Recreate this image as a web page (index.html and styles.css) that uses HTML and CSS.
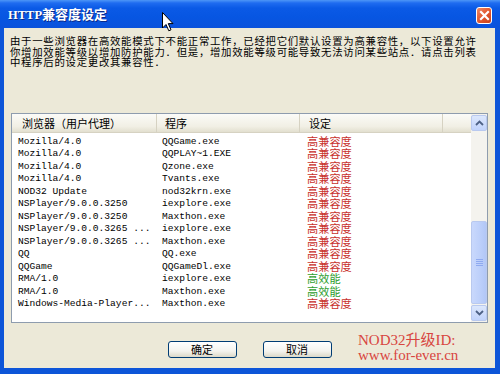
FILE: index.html
```html
<!DOCTYPE html>
<html lang="zh-CN">
<head>
<meta charset="utf-8">
<title>HTTP兼容度设定</title>
<link rel="stylesheet" href="styles.css">
</head>
<body>
<div class="window">
  <div class="titlebar">
    <span class="title"><span class="latin">HTTP</span>兼容度设定</span>
    <div class="close">
      <svg width="11" height="11" viewBox="0 0 11 11"><path d="M2 2 L9 9 M9 2 L2 9" stroke="#fff" stroke-width="2.2" stroke-linecap="square"/></svg>
    </div>
  </div>
  <div class="client">
    <div class="desc">
      <div class="dline">由于一些浏览器在高效能模式下不能正常工作，已经把它们默认设置为高兼容性，以下设置允许</div>
      <div class="dline">你增加效能等级以增加防护能力．但是，增加效能等级可能导致无法访问某些站点．请点击列表</div>
      <div class="dline">中程序后的设定更改其兼容性．</div>
    </div>
    <div class="list">
      <div class="list-main">
        <div class="list-head">
          <div class="hcell h1">浏览器（用户代理）</div>
          <div class="hcell h2">程序</div>
          <div class="hcell h3">设定</div>
          <div class="hcell h4"></div>
        </div>
        <div class="list-body">
          <div class="row"><span class="c1">Mozilla/4.0</span><span class="c2">QQGame.exe</span><span class="c3 compat">高兼容度</span></div>
          <div class="row"><span class="c1">Mozilla/4.0</span><span class="c2">QQPLAY~1.EXE</span><span class="c3 compat">高兼容度</span></div>
          <div class="row"><span class="c1">Mozilla/4.0</span><span class="c2">Qzone.exe</span><span class="c3 compat">高兼容度</span></div>
          <div class="row"><span class="c1">Mozilla/4.0</span><span class="c2">Tvants.exe</span><span class="c3 compat">高兼容度</span></div>
          <div class="row"><span class="c1">NOD32 Update</span><span class="c2">nod32krn.exe</span><span class="c3 compat">高兼容度</span></div>
          <div class="row"><span class="c1">NSPlayer/9.0.0.3250</span><span class="c2">iexplore.exe</span><span class="c3 compat">高兼容度</span></div>
          <div class="row"><span class="c1">NSPlayer/9.0.0.3250</span><span class="c2">Maxthon.exe</span><span class="c3 compat">高兼容度</span></div>
          <div class="row"><span class="c1">NSPlayer/9.0.0.3265 ...</span><span class="c2">iexplore.exe</span><span class="c3 compat">高兼容度</span></div>
          <div class="row"><span class="c1">NSPlayer/9.0.0.3265 ...</span><span class="c2">Maxthon.exe</span><span class="c3 compat">高兼容度</span></div>
          <div class="row"><span class="c1">QQ</span><span class="c2">QQ.exe</span><span class="c3 compat">高兼容度</span></div>
          <div class="row"><span class="c1">QQGame</span><span class="c2">QQGameDl.exe</span><span class="c3 compat">高兼容度</span></div>
          <div class="row"><span class="c1">RMA/1.0</span><span class="c2">iexplore.exe</span><span class="c3 perf">高效能</span></div>
          <div class="row"><span class="c1">RMA/1.0</span><span class="c2">Maxthon.exe</span><span class="c3 perf">高效能</span></div>
          <div class="row"><span class="c1">Windows-Media-Player...</span><span class="c2">Maxthon.exe</span><span class="c3 compat">高兼容度</span></div>
        </div>
      </div>
      <div class="scrollbar">
        <div class="sbtn">
          <svg width="9" height="6" viewBox="0 0 9 6"><path d="M1 5 L4.5 1.5 L8 5" fill="none" stroke="#4d6185" stroke-width="1.8"/></svg>
        </div>
        <div class="track"></div>
        <div class="thumb">
          <span class="grip"></span><span class="grip"></span><span class="grip"></span><span class="grip"></span>
        </div>
        <div class="sbtn">
          <svg width="9" height="6" viewBox="0 0 9 6"><path d="M1 1 L4.5 4.5 L8 1" fill="none" stroke="#4d6185" stroke-width="1.8"/></svg>
        </div>
      </div>
    </div>
    <div class="footer">
      <button class="btn">确定</button>
      <button class="btn">取消</button>
      <div class="watermark">NOD32升级ID:<br>www.for-ever.cn</div>
    </div>
  </div>
  <svg class="cursor" width="13" height="20" viewBox="0 0 13 20">
    <path d="M0.5 0.5 L0.5 16 L4 12.5 L6.8 18.8 L9 17.8 L6.3 11.6 L11 11.6 Z" fill="#fff" stroke="#000" stroke-width="1"/>
  </svg>
</div>
</body>
</html>
```

FILE: styles.css
```css
html, body {
  margin: 0;
  padding: 0;
  background: #fff;
}

.window {
  position: relative;
  width: 500px;
  height: 374px;
  box-sizing: border-box;
  background: #0d55d8;
  display: flex;
  flex-direction: column;
  font-family: "Noto Sans CJK SC", "Liberation Sans", sans-serif;
  overflow: hidden;
}

.titlebar {
  height: 28px;
  flex: none;
  display: flex;
  align-items: center;
  justify-content: space-between;
  padding: 0 8px 0 8px;
  background: linear-gradient(#4d96f7 0px, #1f6cf0 3px, #0b5ae6 8px, #0756e2 60%, #0a52dc 100%);
}

.title {
  color: #fff;
  font-weight: bold;
  font-size: 13px;
  line-height: 16px;
  text-shadow: 1px 1px 0 #0a2a8a;
  margin-top: 1px;
}

.latin {
  font-family: "Liberation Serif", serif;
  font-size: 12.5px;
  font-weight: bold;
}

.close {
  width: 16px;
  height: 17px;
  box-sizing: border-box;
  border: 1px solid #fff;
  border-radius: 3px;
  background: linear-gradient(135deg, #f08a66 0%, #e2582f 50%, #c8401a 100%);
  display: flex;
  align-items: center;
  justify-content: center;
  margin-top: 2px;
}

.client {
  flex: 1;
  margin: 0 5px 6px 4px;
  background: #ece9d8;
  display: flex;
  flex-direction: column;
  padding-top: 9px;
}

.desc {
  padding-left: 6px;
  color: #000;
}

.dline {
  font-family: "Liberation Serif", "Noto Sans CJK SC", sans-serif;
  font-size: 10.4px;
  line-height: 10.6px;
  letter-spacing: 0.72px;
  white-space: nowrap;
}

.list {
  margin: 44.5px 7px 0 7px;
  height: 210px;
  box-sizing: border-box;
  border: 1px solid #8e9cae;
  background: #fff;
  display: flex;
}

.list-main {
  flex: 1;
  display: flex;
  flex-direction: column;
}

.list-head {
  height: 19px;
  display: grid;
  grid-template-columns: 145px 143px 143px 1fr;
  background: linear-gradient(#fbfbf8, #f1efe4 70%, #e2dfcf);
  border-bottom: 1px solid #d6d2c2;
  box-sizing: border-box;
}

.hcell {
  font-size: 11px;
  line-height: 19px;
  color: #000;
  border-right: 1px solid #d6d2c2;
  white-space: nowrap;
}

.h1 { padding-left: 10px; }
.h2 { padding-left: 8px; }
.h3 { padding-left: 9px; }
.h4 { border-right: none; }

.list-body {
  padding-top: 2.5px;
}

.row {
  display: grid;
  grid-template-columns: 145px 143px 143px;
  height: 12.5px;
  align-items: center;
}

.c1, .c2 {
  font-family: "Liberation Mono", monospace;
  font-size: 9.6px;
  line-height: 12.5px;
  color: #000;
  white-space: nowrap;
}

.c1 { padding-left: 6px; }
.c2 { padding-left: 5px; }

.c3 {
  padding-left: 7px;
  font-family: "Liberation Serif", "Noto Sans CJK SC", sans-serif;
  font-size: 11.2px;
  line-height: 12.5px;
  white-space: nowrap;
}

.compat { color: #c8302c; }
.perf { color: #2f9e2f; }

.scrollbar {
  width: 16px;
  display: flex;
  flex-direction: column;
  background: #f4f3ee;
  padding: 1px 0;
  box-sizing: border-box;
}

.sbtn {
  height: 16px;
  flex: none;
  box-sizing: border-box;
  border: 1px solid #b9c9ef;
  border-radius: 2px;
  background: linear-gradient(#dce7fc, #c1d3fb);
  display: flex;
  align-items: center;
  justify-content: center;
}

.track {
  flex: 1;
}

.thumb {
  height: 83px;
  flex: none;
  box-sizing: border-box;
  border: 1px solid #b9c9ef;
  border-radius: 2px;
  background: linear-gradient(90deg, #c9d8fc, #bccffa 60%, #b2c7f6);
  display: flex;
  flex-direction: column;
  align-items: center;
  justify-content: center;
  gap: 1px;
  margin-bottom: 1px;
}

.grip {
  width: 7px;
  height: 1px;
  background: #8faaf0;
}

.footer {
  position: relative;
  flex: 1;
  display: flex;
  justify-content: center;
  align-items: flex-start;
  gap: 26px;
  padding-top: 18px;
}

.btn {
  width: 69px;
  height: 17px;
  padding: 0;
  box-sizing: border-box;
  border: 1px solid #003c74;
  border-radius: 3px;
  background: linear-gradient(#ffffff, #f4f3ee 60%, #dcd8c8);
  font-family: "Noto Sans CJK SC", sans-serif;
  font-size: 11px;
  line-height: 15px;
  color: #000;
}

.watermark {
  position: absolute;
  left: 354px;
  top: 9.5px;
  font-family: "Liberation Serif", "Noto Sans CJK SC", serif;
  font-size: 15px;
  line-height: 15px;
  color: #d8453f;
  white-space: nowrap;
}

.cursor {
  position: absolute;
  left: 162px;
  top: 12px;
}
```
